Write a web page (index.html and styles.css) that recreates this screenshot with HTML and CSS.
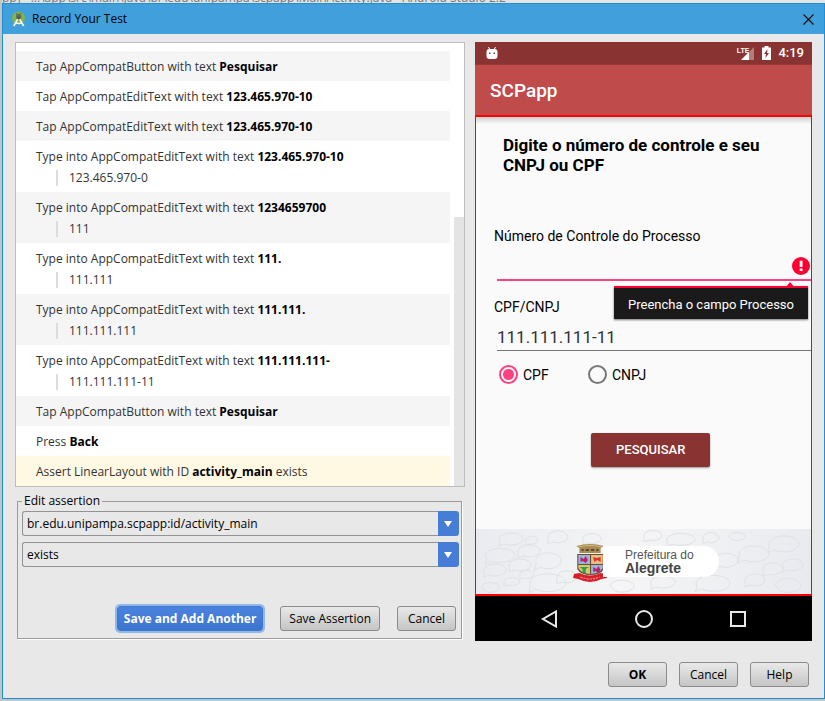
FILE: index.html
```html
<!DOCTYPE html>
<html lang="en">
<head>
<meta charset="utf-8">
<meta name="viewport" content="width=device-width, initial-scale=1">
<title>Record Your Test</title>
<link rel="stylesheet" href="styles.css">
</head>
<body>
<div class="backdrop"><span>pp] - ...\app\src\main\java\br\edu\unipampa\scpapp\MainActivity.java - Android Studio 2.2</span></div>
<main class="dialog">
  <header class="titlebar">
    <svg class="logo" viewBox="0 0 16 16" aria-hidden="true">
      <circle cx="7.500" cy="7" r="6.500" fill="#7fb548"/>
      <path d="M5 5.500a2.700 2.700 0 0 1 5.400 0v2.200H5z" fill="#5b6f54"/>
      <path d="M5.300 2l1 1.500M10 2L9 3.500" stroke="#5b6f54"/>
      <path d="M7.600 6.500L2.800 15M7.600 6.500L12.700 15M4 11.500q3.600 2 7.500 0" fill="none" stroke="#f1f3f0" stroke-width="1.700"/>
      <circle cx="7.600" cy="7" r="1.500" fill="#455050"/>
    </svg>
    <h1>Record Your Test</h1>
    <button class="close" type="button" aria-label="Close"><svg viewBox="0 0 11 11" aria-hidden="true"><path d="M.5.5l10 10M10.500.5l-10 10" stroke="#111" stroke-width="1.200"/></svg></button>
  </header>

  <div class="content">
    <section class="left">
      <div class="steps">
        <ol>
          <li>Tap AppCompatButton with text <b>Pesquisar</b></li>
          <li>Tap AppCompatEditText with text <b>123.465.970-10</b></li>
          <li>Tap AppCompatEditText with text <b>123.465.970-10</b></li>
          <li>Type into AppCompatEditText with text <b>123.465.970-10</b><span class="typed">123.465.970-0</span></li>
          <li>Type into AppCompatEditText with text <b>1234659700</b><span class="typed">111</span></li>
          <li>Type into AppCompatEditText with text <b>111.</b><span class="typed">111.111</span></li>
          <li>Type into AppCompatEditText with text <b>111.111.</b><span class="typed">111.111.111</span></li>
          <li>Type into AppCompatEditText with text <b>111.111.111-</b><span class="typed">111.111.111-11</span></li>
          <li>Tap AppCompatButton with text <b>Pesquisar</b></li>
          <li>Press <b>Back</b></li>
          <li class="selected">Assert LinearLayout with ID <b>activity_main</b> exists</li>
        </ol>
        <div class="scrollbar"></div>
      </div>

      <fieldset class="assertion">
        <legend>Edit assertion</legend>
        <div class="combo">
          <select aria-label="Element"><option>br.edu.unipampa.scpapp:id/activity_main</option></select>
          <svg viewBox="0 0 21 25" aria-hidden="true"><path d="M6 10h8l-4 6z" fill="#fff"/></svg>
        </div>
        <div class="combo">
          <select aria-label="Condition"><option>exists</option></select>
          <svg viewBox="0 0 21 25" aria-hidden="true"><path d="M6 10h8l-4 6z" fill="#fff"/></svg>
        </div>
        <div class="actions">
          <button class="btn primary" type="button">Save and Add Another</button>
          <button class="btn" type="button">Save Assertion</button>
          <button class="btn" type="button">Cancel</button>
        </div>
      </fieldset>
    </section>

    <section class="phone">
      <div class="status">
        <svg class="droid" viewBox="0 0 12 14" aria-hidden="true"><path d="M2.500 1l1 2M9.500 1l-1 2" stroke="#fff"/><path d="M.5 6a3 3 0 0 1 3-3h5a3 3 0 0 1 3 3v4a3 3 0 0 1-3 3h-5a3 3 0 0 1-3-3z" fill="#fff"/><path d="M3 6.500h1.500v1.500H3zM7.500 6.500H9v1.500H7.500z" fill="#8a3333"/></svg>
        <div class="signal">
          <span>LTE</span>
          <svg viewBox="0 0 13 13" aria-hidden="true"><path d="M13 0v13H0z" fill="#b47c7c"/><path d="M8 5v8H0z" fill="#fff"/></svg>
        </div>
        <svg class="battery" viewBox="0 0 9 14" aria-hidden="true"><path d="M2.500 0h4v1.500H9V14H0V1.500h2.500z" fill="#fff"/><path d="M5.500 3L2 8h2l-.5 4L7 7H5z" fill="#8a3333"/></svg>
        <span class="clock">4:19</span>
      </div>
      <div class="appbar">SCPapp</div>
      <div class="screen">
        <form class="form">
          <h2>Digite o número de controle e seu CNPJ ou CPF</h2>
          <label class="caption" for="processo">Número de Controle do Processo</label>
          <div class="field error">
            <input id="processo" type="text">
            <svg class="alert" viewBox="0 0 18 18" aria-hidden="true"><circle cx="9" cy="9" r="9" fill="#ff0033"/><path d="M7.700 3.700h2.800v6.300H7.700zM7.700 11.500h2.800v2.600H7.700z" fill="#fff"/></svg>
            <div class="tip" role="alert">Preencha o campo Processo</div>
          </div>
          <label class="caption" for="doc">CPF/CNPJ</label>
          <div class="field"><input id="doc" type="text" value="111.111.111-11"></div>
          <div class="radios">
            <label><input type="radio" name="kind" checked>CPF</label>
            <label><input type="radio" name="kind">CNPJ</label>
          </div>
          <button class="search" type="button">PESQUISAR</button>
        </form>
        <div class="banner">
          <svg class="bubbles" viewBox="0 0 335 65" preserveAspectRatio="none" aria-hidden="true">
            <g fill="none" stroke="#dfe1e5">
              <path d="M23 10a12 6 0 1 1 5 5l-6 2 2-4zM50 12a6 4 0 1 1 4 3l-4 1zM9 26a15 7 0 1 1 6 6l-6 3 2-5zM42 22a11 6 0 1 1 5 5l-5 2zM33 36a11 6 0 1 1 5 5l-5 2zM8 41a11 6 0 1 1 5 5l-5 2zM60 29a13 8 0 1 1 4 9l-6 4 2-7zM44 46a7 4 0 1 1 4 3l-4 1zM54 53a18 9 0 1 1 5 7l-6 4 1-6zM28 53a8 4 0 1 1 4 3l-4 1zM6 60a9 5 0 1 1 5 3z"/>
              <path d="M72 8a10 6 0 1 1 5 5l-5 2zM81 48a10 6 0 1 1 5 5l-5 2zM107 10a9 5 0 1 1 5 4l-5 2zM134 57a12 6 0 1 1 5 5zM168 7a9 5 0 1 1 5 4l-5 2zM191 10a14 6 0 1 1 5 5l-5 3zM227 9a8 5 0 1 1 4 4l-4 2zM220 54a17 8 0 1 1 5 6l-6 3 2-5zM238 31a12 7 0 1 1 5 6l-6 3zM263 24a15 8 0 1 1 5 7l-6 3 1-6zM287 40a10 6 0 1 1 5 5l-5 2zM293 14a15 8 0 1 1 5 7l-6 3 1-6zM269 51a10 6 0 1 1 5 5l-5 2zM299 56a13 7 0 1 1 5 6zM253 8a8 4 0 1 1 4 3zM307 36a10 6 0 1 1 5 5l-5 2zM175 53a12 6 0 1 1 5 5l-5 2z"/>
            </g>
          </svg>
          <div class="brand">
            <svg class="crest" viewBox="0 0 32 39" preserveAspectRatio="none" aria-hidden="true">
              <path d="M3 3q13-4 26 0l-3 2v5H6V5z" fill="#a88a55"/>
              <path d="M5 4q11-3 22 0" stroke="#d6bd7c" fill="none"/>
              <path d="M8 7h2M12 7h3M17 7h3M22 7h2" stroke="#5b4a30" stroke-width="2"/>
              <path d="M4 11h25v15q-3 6-12.500 6T4 26z" fill="#6b4d31"/>
              <path d="M5 12h11v9H5z" fill="#9db4dc"/><path d="M17 12h11v9H17z" fill="#eabd80"/>
              <path d="M5 22h11v9q-9-1-11-6z" fill="#d8c96c"/><path d="M17 22h11v3q-2 5-11 6z" fill="#9db4dc"/>
              <path d="M7 14l3 2 2-3 2 4-2 3-3-2-2 1zM19 24l3 2 2-3 2 4-2 3-3-2-2 1z" fill="#b8246d"/>
              <path d="M19 14l3 1 4-1v5l-3-2-3 2z" fill="#d9362e"/>
              <path d="M6 24h9l-3 2v4H9v-4z" fill="#27a34e"/>
              <path d="M1 31l5-1q10 5 20 0l5 1 1 4-5 1q-11 6-22 0l-5-1z" fill="#d5202b"/>
              <path d="M7 34q9 4 18 0" fill="none" stroke="#f5a19e" stroke-dasharray="2 1"/>
            </svg>
            <div class="pill"><span>Prefeitura do</span><strong>Alegrete</strong></div>
          </div>
        </div>
      </div>
      <nav class="softkeys">
        <button type="button" aria-label="Back"><svg viewBox="0 0 18 18"><path d="M15 1.500v15L2 9z"/></svg></button>
        <button type="button" aria-label="Home"><svg viewBox="0 0 18 18"><circle cx="9" cy="9" r="8"/></svg></button>
        <button type="button" aria-label="Recents"><svg viewBox="0 0 18 18"><path d="M2 2h14v14H2z"/></svg></button>
      </nav>
    </section>
  </div>

  <footer class="dialog-actions">
    <button class="btn ok" type="button">OK</button>
    <button class="btn" type="button">Cancel</button>
    <button class="btn" type="button">Help</button>
  </footer>
</main>
</body>
</html>
```

FILE: styles.css
```css
* { box-sizing: border-box; }

body {
  margin: 0;
  padding: 0 0 2px 2px;
  background: #c4c4c4;
  font: 12px/16px "Open Sans", "Noto Sans", sans-serif;
  color: #000;
}

button, input, select { font: inherit; color: inherit; }

.backdrop {
  display: flex;
  align-items: flex-end;
  height: 3px;
  overflow: hidden;
  background: #e4e4e4;
  color: #777;
  line-height: 10px;
  white-space: nowrap;
}

.dialog {
  border: 1px solid #1a8fdc;
  background: #e8e8e8;
}

.titlebar {
  display: flex;
  align-items: center;
  gap: 5px;
  height: 30px;
  padding: 0 10px 0 8px;
  background: #419fdb;
}
.titlebar h1 { margin: 0; font-size: 12px; font-weight: 400; }
.logo { width: 16px; height: 16px; }
.close { display: flex; margin-left: auto; padding: 0; border: 0; background: none; }
.close svg { width: 11px; height: 11px; }

.content {
  display: grid;
  grid-template-columns: 450fr 337fr;
  gap: 10px;
  padding: 8px 12px 0;
}

.left { display: flex; flex-direction: column; gap: 6px; min-width: 0; padding-bottom: 2px; }

.steps {
  display: flex;
  gap: 4px;
  padding-top: 8px;
  border: 1px solid #bdbdbd;
  background: #fff;
}
.steps ol { flex: 1; margin: 0; padding: 0; list-style: none; }
.steps li { padding: 8px 20px 6px; color: #333; }
.steps li:nth-child(odd) { background: #f5f5f5; }
.steps li.selected { background: #fff8e3; }
.steps b { color: #000; }
.typed {
  display: block;
  margin: 5px 0 0 20px;
  padding-left: 11px;
  border-left: 2px solid #dcdcdc;
}
.scrollbar { align-self: flex-end; width: 10px; height: 269px; background: #e4e4e4; }

.assertion {
  margin: 0 3px 0 2px;
  padding: 2px 2px 7px 4px;
  border: 1px solid #9b9b9b;
  box-shadow: 1px 1px #fff;
}
.assertion legend { padding: 0 2px; }

.combo { display: flex; margin-bottom: 6px; }
.combo select {
  flex: 1;
  height: 25px;
  padding: 0 4px;
  border: 1px solid #939393;
  border-right: 0;
  border-radius: 3px 0 0 3px;
  background: transparent;
  appearance: none;
}
.combo svg { width: 21px; height: 25px; border-radius: 0 3px 3px 0; background: #467dd6; }

.actions { display: flex; justify-content: flex-end; align-items: center; padding: 33px 3px 0; gap: 17px; }

.btn {
  min-width: 59px;
  height: 25px;
  padding: 0 8px;
  border: 1px solid #8b8b8b;
  border-radius: 3px;
  background: linear-gradient(#e9e9e9, #c5c5c5);
}
.btn.primary {
  padding: 0 6px;
  border-color: #4076c8;
  background: linear-gradient(#4a83df, #3d74cd);
  box-shadow: 0 0 0 2px #8fb9e8;
  color: #fff;
  font-weight: 700;
}
.btn.ok { font-weight: 700; }

.phone { display: flex; flex-direction: column; min-width: 0; font-family: Roboto, sans-serif; }

.status {
  display: flex;
  align-items: center;
  height: 23px;
  padding: 0 8px 0 11px;
  border-bottom: 1px solid #973939;
  background: #8a3333;
  color: #fff;
}
.droid { width: 12px; height: 14px; margin-right: auto; }
.signal { display: flex; align-items: flex-end; margin-right: 8px; }
.signal span { align-self: flex-start; margin-right: -8px; font: 700 7px/8px "Liberation Sans", sans-serif; }
.signal svg { width: 13px; height: 13px; }
.battery { width: 9px; height: 14px; margin-right: 7px; }
.clock { font-size: 13px; font-weight: 500; }

.appbar {
  height: 50px;
  padding: 0 15px;
  background: #c04b4b;
  color: #fff;
  font-size: 19px;
  font-weight: 500;
  line-height: 52px;
}

.screen {
  display: flex;
  flex-direction: column;
  flex: 1;
  border: solid #f00;
  border-width: 2px 1px;
  background: #fafafa;
}
.form {
  flex: 1;
  padding: 18px 0 0 18px;
  background: linear-gradient(#d0d0d0, #fafafa 7px);
  font-size: 14px;
}
.form h2 { margin: 0 40px 53px 9px; font-size: 17px; font-weight: 700; line-height: 20px; }
.caption { display: block; }
.field { position: relative; margin-left: 3px; border-bottom: 1px solid #777; }
.field input {
  display: block;
  width: 100%;
  height: 35px;
  padding: 8px 0 0;
  border: 0;
  outline: 0;
  background: none;
  color: #333;
  font-size: 17px;
}
.field.error { margin-bottom: 18px; border-bottom: 2px solid #ff4081; }
.alert { position: absolute; right: 1px; bottom: 4px; width: 18px; height: 18px; }
.tip {
  position: absolute;
  top: 42px;
  right: 3px;
  padding: 9px 14px 6px;
  border-top: 2px solid #ff0033;
  background: #1a1a1a;
  box-shadow: 0 1px 2px #777;
  color: #fff;
  font-size: 13px;
  white-space: nowrap;
}
.tip::before {
  content: "";
  position: absolute;
  right: 13px;
  bottom: 100%;
  border: 5px solid transparent;
  border-top: 0;
  border-bottom: 6px solid #ff0033;
}

.radios { display: grid; grid-template-columns: 89px 89px; margin: 14px 0 0 5px; }
.radios label { display: flex; align-items: center; gap: 5px; }
.radios input {
  width: 19px;
  height: 19px;
  margin: 0;
  border: 2px solid #777;
  border-radius: 50%;
  appearance: none;
}
.radios input:checked {
  border-color: #ff4081;
  background: radial-gradient(circle, #ff4081 5px, transparent 6px);
}
.search {
  display: block;
  height: 34px;
  margin: 49px 0 0 97px;
  padding: 0 25px;
  border: 0;
  border-radius: 2px;
  background: #8a3333;
  box-shadow: 0 1px 2px #999;
  color: #fff;
  font-size: 13px;
  font-weight: 500;
}

.banner {
  position: relative;
  height: 65px;
  padding: 14px 0 0 97px;
  background: linear-gradient(100deg, #e9ebf0, #f5f5f6 45%, #e8eaee);
}
.bubbles { position: absolute; inset: 0; width: 100%; height: 100%; }
.brand { position: relative; display: flex; }
.crest { width: 34px; height: 39px; }
.pill {
  display: flex;
  flex-direction: column;
  height: 31px;
  margin: 3px 0 0 -4px;
  padding: 3px 25px 0 22px;
  border-radius: 0 16px 16px 0;
  background: #fff;
  color: #555;
  font: 12px/13px "Liberation Sans", sans-serif;
}
.pill strong { color: #444; font-size: 14px; font-weight: 700; line-height: 12px; }

.softkeys { display: flex; justify-content: center; gap: 76px; height: 45px; background: #000; }
.softkeys button { display: flex; align-items: center; padding: 0; border: 0; background: none; }
.softkeys svg { width: 18px; height: 18px; fill: none; stroke: #e8e8e8; stroke-width: 2; }

.dialog-actions { display: flex; justify-content: flex-end; gap: 12px; padding: 21px 15px 11px; }
```
